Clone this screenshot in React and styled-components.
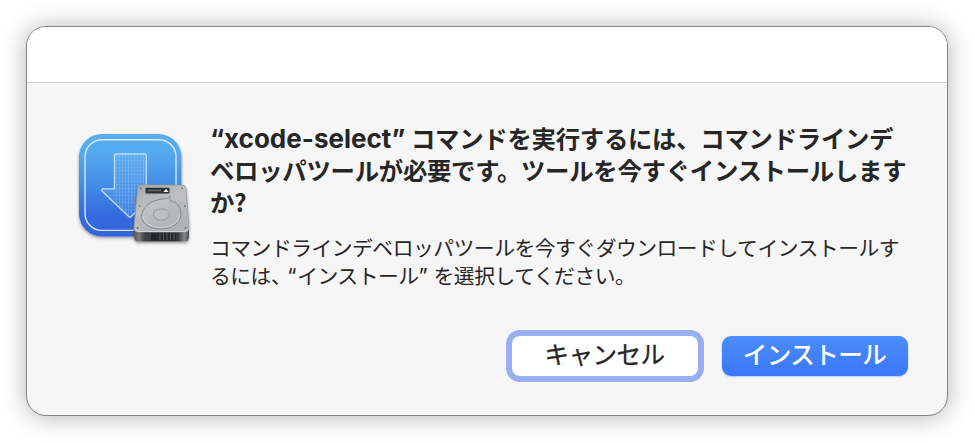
import styled, { createGlobalStyle } from "styled-components";

const columns = [116.5, 119.5, 122.5, 125.5, 128.5, 131.5, 134.5, 137.5, 140.5, 143.5];
const rows = [157, 160.5, 164, 167.5, 171, 174.5, 178, 181.5, 185, 188.5, 192, 195.5, 199, 202.5, 206, 209.5];

export default function App() {
  return (
    <>
      <GlobalStyle />
      <Desktop>
        <Dialog role="alertdialog">
          <TitleBar />
          <Content>
            <InstallerIcon />
            <Message>
              <Title>
                <Latin>“xcode-select”</Latin>コマンドを実行するには、コマンドラインデ
                <br />
                ベロッパツールが必要です。ツールを今すぐインストールします
                <br />
                か?
              </Title>
              <Description>
                コマンドラインデベロッパツールを今すぐダウンロードしてインストールす
                <br />
                るには<Comma>、</Comma>
                <Quote>“</Quote>インストール<Quote $close>”</Quote>を選択してください。
              </Description>
            </Message>
          </Content>
          <Actions>
            <Button>キャンセル</Button>
            <Button $primary>インストール</Button>
          </Actions>
        </Dialog>
      </Desktop>
    </>
  );
}

function InstallerIcon() {
  return (
    <Icon viewBox="70 125 130 130" aria-hidden="true">
      <defs>
        <linearGradient id="tile" x1="0" y1="0" x2="0" y2="1">
          <stop offset="0" stopColor="#58aef0" />
          <stop offset="0.2" stopColor="#55a9ee" />
          <stop offset="0.55" stopColor="#4087e5" />
          <stop offset="0.8" stopColor="#3569de" />
          <stop offset="1" stopColor="#3664da" />
        </linearGradient>
        <linearGradient id="metal" x1="0" y1="0" x2="0.5" y2="1">
          <stop offset="0" stopColor="#a7a9ab" />
          <stop offset="0.5" stopColor="#bec0c2" />
          <stop offset="1" stopColor="#b0b3b6" />
        </linearGradient>
        <linearGradient id="front" x1="0" y1="0" x2="1" y2="0">
          <stop offset="0" stopColor="#55585b" />
          <stop offset="0.1" stopColor="#777a7c" />
          <stop offset="0.2" stopColor="#3c3e40" />
          <stop offset="0.8" stopColor="#393b3d" />
          <stop offset="0.92" stopColor="#85888a" />
          <stop offset="1" stopColor="#4b4d4f" />
        </linearGradient>
        <clipPath id="arrow">
          <path d="M114.5 154.5H146V188.7H157.5L130 217L102 189.5L114.5 188.7Z" />
        </clipPath>
        <filter id="drop" x="-20%" y="-20%" width="140%" height="150%">
          <feDropShadow dx="0" dy="1.5" stdDeviation="1.5" floodOpacity="0.4" />
        </filter>
      </defs>
      <rect x="79" y="134" width="102.5" height="102.5" rx="23" fill="url(#tile)" filter="url(#drop)" />
      <rect x="85" y="139.8" width="91" height="90.6" rx="17" fill="none" stroke="#d5eafa" strokeWidth="1.4" />
      <g clipPath="url(#arrow)">
        <rect x="100" y="153" width="60" height="66" fill="#73b5ef" opacity="0.28" />
        {columns.map((x) => (
          <path key={x} d={`M${x} 154V218`} stroke="#a9d2f8" strokeWidth="0.5" opacity="0.5" />
        ))}
        {rows.map((y) => (
          <path key={y} d={`M101 ${y}H159`} stroke="#a9d2f8" strokeWidth="0.5" opacity="0.35" />
        ))}
      </g>
      <path
        d="M116 154H145Q146.3 154 146.3 155.5V188.7H156.5Q158 189 157 190.3L131 216.8Q130 217.8 129 216.8L102 191Q101 189 103 188.8H114.5V155.5Q114.5 154 116 154Z"
        fill="none"
        stroke="#c0def8"
        strokeWidth="1.3"
      />
      <g filter="url(#drop)">
        <path d="M134 228L189 227V237Q188.5 241.5 185 241.5H138.5Q134.5 241.5 134 237.5Z" fill="url(#front)" />
        <path d="M151 233H176V240.5H151Z" fill="#242527" />
        <path d="M160 233V240M163.5 233V240M167 233V240M170.5 233V240M174 233V240" stroke="#6a6c6e" strokeWidth="0.8" />
        <path
          d="M142 185H182Q185.5 185 186 188.5L189 227Q189 232 184.5 232H138.5Q133.8 232 134 227.5L137.5 189Q138 185 142 185Z"
          fill="url(#metal)"
          stroke="#929597"
          strokeWidth="0.7"
        />
        <path d="M135 229.5Q136 231.5 139 231.5H184Q187.5 231.5 188.5 228.5" fill="none" stroke="#dedfdf" strokeWidth="0.8" />
      </g>
      <rect x="145.5" y="187.8" width="24" height="5.6" rx="0.6" fill="#2d3032" />
      <path d="M148 190.5H161" stroke="#63686b" strokeWidth="1.4" />
      <path d="M166 188.8L168.6 192H163.4Z" fill="#eef1f2" />
      <path
        d="M170.5 196C170 199 162 198.5 155 200.5C146 203.5 141.5 211 141.5 216.5C142 225 152 229 161 229C172 229 181 223 181 213.5C181 206 176 202 170 200.5V196"
        fill="none"
        stroke="#858b91"
        strokeWidth="1"
      />
      <path d="M142.8 217C145 225 154 227.5 162 227.5C172 227 179 222 180 215" fill="none" stroke="#d8dde1" strokeWidth="0.8" />
      <ellipse cx="161.3" cy="214.5" rx="8" ry="5.7" fill="#bdc0c3" stroke="#8e9397" strokeWidth="0.9" />
      {[[139.5, 206], [185, 206], [137.5, 228], [185.5, 228], [141, 188.3], [182, 188.3]].map(([x, y]) => (
        <circle key={`${x}-${y}`} cx={x} cy={y} r="0.9" fill="#6b7075" />
      ))}
    </Icon>
  );
}

const GlobalStyle = createGlobalStyle`
  * {
    box-sizing: border-box;
  }

  body {
    margin: 0;
    background: #ffffff;
    overflow: hidden;
  }
`;

const Desktop = styled.main`
  height: 443px;
  padding: 26px 27px 27px 26px;
  background: #ffffff;
  font-family: Inter, "Noto Sans CJK JP", sans-serif;
  color: #262626;
`;

const Dialog = styled.section`
  display: flex;
  flex-direction: column;
  height: 390px;
  border: 1px solid #858585;
  border-radius: 20px;
  background: #f6f6f6;
  overflow: hidden;
  box-shadow: 0 1px 24px rgba(0, 0, 0, 0.3);
`;

const TitleBar = styled.header`
  height: 56px;
  flex-shrink: 0;
  background: #ffffff;
  border-bottom: 1px solid #d2d2d2;
`;

const Content = styled.div`
  display: flex;
  height: 247px;
  padding: 42px 0 0 43px;
`;

const Icon = styled.svg`
  display: block;
  width: 130px;
  height: 130px;
  flex-shrink: 0;
`;

const Message = styled.div`
  padding-left: 10px;
  white-space: nowrap;
`;

const Title = styled.h1`
  margin: -3px 0 0;
  font-family: "Noto Sans CJK JP", sans-serif;
  font-size: 24.4px;
  font-weight: 700;
  line-height: 32px;
  letter-spacing: -0.28px;
`;

const Latin = styled.span`
  display: inline-block;
  width: 201px;
  font-family: Inter, sans-serif;
  font-size: 26px;
  line-height: 30px;
  letter-spacing: 0;
`;

const Description = styled.p`
  margin: 15px 0 0;
  font-family: "Noto Sans CJK JP", sans-serif;
  font-size: 20.8px;
  line-height: 28px;
  letter-spacing: -0.5px;
`;

const Comma = styled.span`
  letter-spacing: -4.5px;
`;

const Quote = styled.span`
  display: inline-block;
  width: ${(props) => (props.$close ? "15px" : "10px")};
  font-family: Inter, sans-serif;
  line-height: 24px;
`;

const Actions = styled.footer`
  display: flex;
  justify-content: flex-end;
  gap: 24px;
  padding: 6px 39px 0 0;
`;

const Button = styled.button`
  width: 186px;
  height: 40px;
  padding: 0 1px 5px 0;
  border: 0;
  border-radius: ${(props) => (props.$primary ? "9px" : "8px")};
  background: ${(props) => (props.$primary ? "linear-gradient(#4b8df9, #3b76f8)" : "#ffffff")};
  box-shadow: ${(props) =>
    props.$primary ? "0 1px 2px rgba(59, 118, 248, 0.35)" : "0 0 0 6px #98aff2, 0 1px 2px 1px #6f8cdb"};
  color: ${(props) => (props.$primary ? "#ffffff" : "#262626")};
  font-family: "Noto Sans CJK JP", sans-serif;
  font-size: 24.6px;
  font-weight: ${(props) => (props.$primary ? 500 : 400)};
  line-height: 35px;
  letter-spacing: -0.6px;
  -webkit-text-stroke: ${(props) => (props.$primary ? "0" : "0.3px #262626")};
`;
